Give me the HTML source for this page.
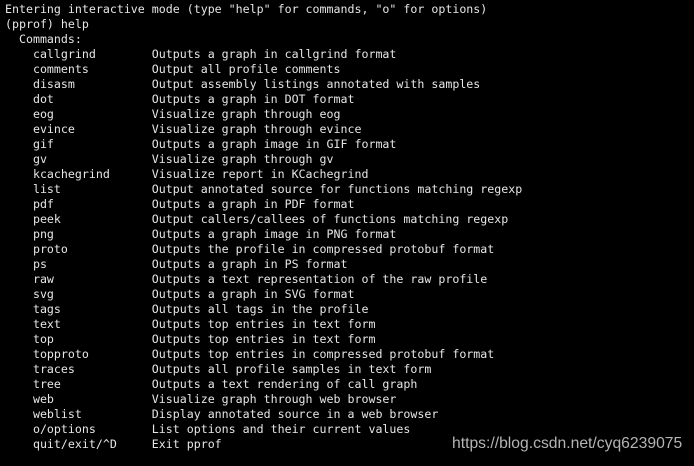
<!DOCTYPE html>
<html><head><style>
html,body{margin:0;padding:0;background:#000;width:694px;height:466px;overflow:hidden}
pre{margin:0;padding:2px 0 0 5px;font-family:"DejaVu Sans Mono","Liberation Mono",monospace;font-size:11.62px;line-height:15px;color:#e6e6e6}
.wm{position:absolute;left:452px;top:435px;font-family:"Liberation Sans",sans-serif;font-size:15.7px;color:#b4b4b4}
</style></head><body>
<pre>Entering interactive mode (type "help" for commands, "o" for options)
(pprof) help
  Commands:
    callgrind        Outputs a graph in callgrind format
    comments         Output all profile comments
    disasm           Output assembly listings annotated with samples
    dot              Outputs a graph in DOT format
    eog              Visualize graph through eog
    evince           Visualize graph through evince
    gif              Outputs a graph image in GIF format
    gv               Visualize graph through gv
    kcachegrind      Visualize report in KCachegrind
    list             Output annotated source for functions matching regexp
    pdf              Outputs a graph in PDF format
    peek             Output callers/callees of functions matching regexp
    png              Outputs a graph image in PNG format
    proto            Outputs the profile in compressed protobuf format
    ps               Outputs a graph in PS format
    raw              Outputs a text representation of the raw profile
    svg              Outputs a graph in SVG format
    tags             Outputs all tags in the profile
    text             Outputs top entries in text form
    top              Outputs top entries in text form
    topproto         Outputs top entries in compressed protobuf format
    traces           Outputs all profile samples in text form
    tree             Outputs a text rendering of call graph
    web              Visualize graph through web browser
    weblist          Display annotated source in a web browser
    o/options        List options and their current values
    quit/exit/^D     Exit pprof</pre>
<div class="wm">https://blog.csdn.net/cyq6239075</div>
</body></html>
